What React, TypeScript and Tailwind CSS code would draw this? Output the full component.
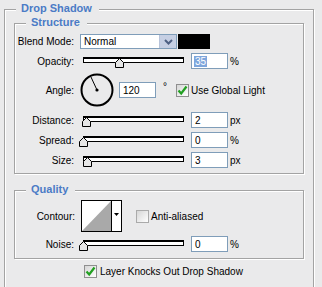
import React from "react";

type SliderRowProps = {
  label: string;
  value: string;
  unit: string;
  thumbLeft: number;
  selected?: boolean;
  className?: string;
};

const etched =
  "border border-[#a3a3a3] shadow-[1px_1px_0_#ffffff,inset_1px_1px_0_#ffffff]";

function Thumb({ left }: { left: number }) {
  return (
    <svg
      width="9"
      height="10"
      viewBox="0 0 9 10"
      className="absolute top-[5px]"
      style={{ left }}
    >
      <polygon
        points="4.5,0.5 8.5,4.5 8.5,9.5 0.5,9.5 0.5,4.5"
        fill="#e6e6e6"
        stroke="#000"
        strokeWidth="1"
      />
    </svg>
  );
}

function Checkbox({ checked }: { checked: boolean }) {
  return (
    <span
      className={`relative flex h-[13px] w-[13px] shrink-0 items-center justify-center border bg-gradient-to-br from-[#d6d6d6] to-white ${
        checked ? "border-[#8f8f8f]" : "border-[#aaaaaa]"
      }`}
    >
      {checked && (
        <svg width="11" height="11" viewBox="0 0 11 11">
          <path
            d="M1.5 5.5 L4.2 8.5 L9.5 1.5"
            fill="none"
            stroke="#22a022"
            strokeWidth="2.2"
          />
        </svg>
      )}
    </span>
  );
}

function NumberBox({
  value,
  selected,
}: {
  value: string;
  selected?: boolean;
}) {
  return (
    <div className="flex h-[16px] w-[37px] shrink-0 items-center border border-[#7f9db9] bg-white pl-[2px]">
      {selected ? (
        <span className="bg-[#7ea6dc] px-[1px] leading-[11px] text-white">
          {value}
        </span>
      ) : (
        <span className="px-[1px]">{value}</span>
      )}
    </div>
  );
}

function SliderRow({
  label,
  value,
  unit,
  thumbLeft,
  selected,
  className = "",
}: SliderRowProps) {
  return (
    <div className={`flex h-[16px] items-center ${className}`}>
      <span className="w-[59px] shrink-0 text-right">{label}</span>

      <div className="relative ml-[9px] h-[16px] w-[101px] shrink-0">
        <div className="mt-[4px] h-[6px] border border-t-2 border-black bg-white" />
        <Thumb left={thumbLeft} />
      </div>

      <div className="ml-[7px]">
        <NumberBox value={value} selected={selected} />
      </div>

      <span className="ml-[2px]">{unit}</span>
    </div>
  );
}

function Legend({ text, left }: { text: string; left: number }) {
  return (
    <span
      className="absolute top-[-9px] bg-[#eaeaeb] pl-[5px] pr-[7px] text-[11px] font-bold leading-[14px] text-[#4b7bc6]"
      style={{ left }}
    >
      {text}
    </span>
  );
}

export default function App() {
  return (
    <div className="h-[287px] w-[322px] overflow-hidden bg-[#eaeaeb] pl-[4px] pt-[9px] font-['Liberation_Sans',Arial,sans-serif] text-[10px] text-black">
      <div className={`relative h-[300px] w-[310px] px-[9px] pt-[13px] ${etched}`}>
        <Legend text="Drop Shadow" left={11} />

        {/* Structure */}
        <div className={`relative h-[151px] w-[290px] ${etched}`}>
          <Legend text="Structure" left={11} />

          <div className="mt-[10px] flex h-[15px] items-center">
            <span className="w-[59px] shrink-0 text-right">Blend Mode:</span>

            <div className="ml-[6px] flex h-[15px] w-[97px] shrink-0 border border-[#7f9db9] bg-white">
              <span className="flex-1 pl-[3px] leading-[13px]">Normal</span>
              <span className="flex h-full w-[17px] items-center justify-center border-l border-[#b7c3da] bg-[#c6cfe3]">
                <svg width="9" height="6" viewBox="0 0 9 6">
                  <path
                    d="M1 1 L4.5 4.5 L8 1"
                    fill="none"
                    stroke="#4d5f82"
                    strokeWidth="2"
                  />
                </svg>
              </span>
            </div>

            <div className="ml-[1px] h-[15px] w-[32px] bg-black" />
          </div>

          <SliderRow
            className="mt-[4px]"
            label="Opacity:"
            value="35"
            unit="%"
            thumbLeft={32}
            selected
          />

          <div className="mt-[4px] flex h-[34px] items-center">
            <span className="w-[59px] shrink-0 text-right">Angle:</span>

            <svg
              width="34"
              height="34"
              viewBox="0 0 34 34"
              className="ml-[6px] shrink-0"
            >
              <circle
                cx="17"
                cy="17"
                r="15.5"
                fill="none"
                stroke="#000"
                strokeWidth="2"
              />
              <line
                x1="17"
                y1="17"
                x2="10.7"
                y2="3.4"
                stroke="#000"
                strokeWidth="1"
              />
              <circle cx="17" cy="17" r="1.6" fill="#000" />
            </svg>

            <div className="ml-[5px]">
              <NumberBox value="120" />
            </div>

            <span className="relative top-[-4px] ml-[7px] w-[13px]">°</span>

            <Checkbox checked />

            <span className="ml-[2px]">Use Global Light</span>
          </div>

          <SliderRow
            className="mt-[5px]"
            label="Distance:"
            value="2"
            unit="px"
            thumbLeft={-1}
          />

          <SliderRow
            className="mt-[4px]"
            label="Spread:"
            value="0"
            unit="%"
            thumbLeft={-4}
          />

          <SliderRow
            className="mt-[4px]"
            label="Size:"
            value="3"
            unit="px"
            thumbLeft={0}
          />
        </div>

        {/* Quality */}
        <div className={`relative mt-[16px] h-[69px] w-[290px] ${etched}`}>
          <Legend text="Quality" left={11} />

          <div className="mt-[9px] flex h-[32px] items-center">
            <span className="w-[60px] shrink-0 text-right">Contour:</span>

            <div className="ml-[6px] flex h-[32px] w-[41px] shrink-0 border border-black bg-white">
              <svg width="29" height="30" viewBox="0 0 29 30" className="shrink-0">
                <polygon points="0,30 29,0 29,30" fill="#a9a9a9" />
              </svg>
              <span className="flex flex-1 justify-center border-l border-black pt-[12px]">
                <svg width="5" height="3" viewBox="0 0 5 3">
                  <polygon points="0,0 5,0 2.5,3" fill="#000" />
                </svg>
              </span>
            </div>

            <div className="ml-[14px]">
              <Checkbox checked={false} />
            </div>

            <span className="ml-[2px]">Anti-aliased</span>
          </div>

          <SliderRow
            className="mt-[4px]"
            label="Noise:"
            value="0"
            unit="%"
            thumbLeft={-4}
          />
        </div>

        <div className="mt-[6px] flex h-[13px] items-center pl-[70px]">
          <Checkbox checked />
          <span className="ml-[3px]">Layer Knocks Out Drop Shadow</span>
        </div>
      </div>
    </div>
  );
}
